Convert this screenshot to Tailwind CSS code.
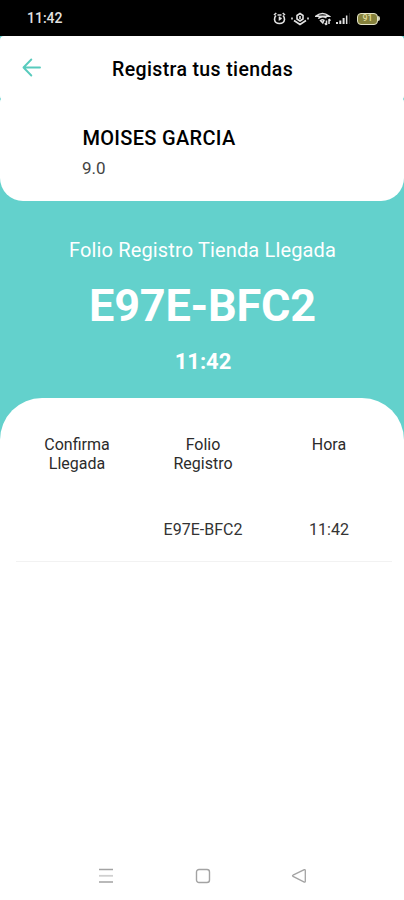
<!DOCTYPE html>
<html lang="es">
<head>
<meta charset="utf-8">
<meta name="viewport" content="width=device-width, initial-scale=1">
<title>Registra tus tiendas</title>
<script src="https://cdn.jsdelivr.net/npm/@tailwindcss/browser@4"></script>
</head>
<body class="bg-white">
<div class="flex h-[900px] w-[404px] flex-col overflow-hidden bg-[#63d1cc] font-[Roboto,sans-serif] text-black">
  <div class="flex h-9 shrink-0 items-center justify-between bg-black pl-[27px] pr-[24px] text-[#e2e2e2]">
    <span class="text-[14px] font-medium leading-9">11:42</span>
    <div class="flex items-center pt-px">
      <svg class="mr-[5px] h-[13px] w-[13px]" viewBox="0 0 13 13" fill="none" stroke="currentColor" stroke-width="1.6"><path d="M3 3.500Q1.500 5 1.500 7.500 2 11.500 6.500 11.500T11.500 7.500Q11.500 5 10 3.500M1 3 3.300 1M12 3 9.700 1M4.500 3h4M6.500 4.500V7.500L8.500 6"/></svg>
      <svg class="mr-[6px] h-[14px] w-[18px]" viewBox="0 0 18 14" fill="none" stroke="currentColor" stroke-width="1.6"><path d="M6 3.500 9 1.500l3 2v3.500L9 9 6 7ZM9 4v3M1 5.500v2M17 5.500v2M3 8.500 9 12.500 15 8.500"/></svg>
      <svg class="mr-[5px] h-[14px] w-[16px]" viewBox="0 0 16 14" fill="none" stroke="currentColor" stroke-width="1.5"><path d="M1 4.200Q7.500-1 14 4.200ZM3.200 6.500Q7.500 3 11.500 6M5.500 8.500Q7.500 7 9 8.300L7.800 11ZM11.500 13V8.500M9.800 11.200l1.700 1.800M14 7v5M14 7l1.500 1.700"/></svg>
      <svg class="mr-[7px] h-[12px] w-[14px]" viewBox="0 0 14 12" fill="currentColor"><path d="M0 9h2v2H0zM3.300 7.500h2V11h-2zM6.600 5h2v6h-2zM9.900 2.500h1.500V11H9.900z"/><path fill="#333" d="M13.300 0h.7v11h-.7z"/></svg>
      <span class="flex items-center">
        <span class="flex h-[12px] w-[21px] items-center justify-center rounded-[4px] border border-[#e4e4ca] bg-[#85813b] text-[9px] font-medium leading-none text-[#dedb9a]">91</span>
        <span class="h-[5px] w-[2px] rounded-r bg-[#d0d0b4]"></span>
      </span>
    </div>
  </div>
  <header class="flex h-16 shrink-0 items-center rounded-[4px] bg-white">
    <svg class="ml-[22px] h-[20px] w-[20px]" viewBox="0 0 20 20" fill="none" stroke="#58cbbd" stroke-width="1.9" stroke-linecap="round" stroke-linejoin="round"><path d="M18 9.500H1.500M9.300 1.500 1.500 9.500l7.800 8"/></svg>
    <h1 class="ml-[70px] whitespace-nowrap pt-[4px] text-[19.500px] font-medium leading-6 tracking-[0.37px]">Registra tus tiendas</h1>
  </header>
  <section class="-mt-[2px] flex h-[103px] shrink-0 flex-col rounded-t-[4px] rounded-b-[23px] bg-white pl-[82px] pt-[28px]">
    <h2 class="pl-[0.500px] text-[20px] font-medium leading-6 tracking-[0.3px]">MOISES GARCIA</h2>
    <p class="mt-[6px] text-[17px] leading-6 text-[#444]">9.0</p>
  </section>
  <section class="flex h-[197px] shrink-0 flex-col items-center pt-[37px] text-white">
    <p class="whitespace-nowrap pl-px text-[20px] leading-6 tracking-[0.14px]">Folio Registro Tienda Llegada</p>
    <p class="mt-[18px] pl-px text-[45px] font-bold leading-[52px] tracking-[-0.2px]">E97E-BFC2</p>
    <p class="mt-[16px] pl-[2px] text-[22px] font-bold leading-7">11:42</p>
  </section>
  <main class="flex grow flex-col rounded-t-[42px] bg-white pl-[14px] pr-[12px]">
    <div class="grid grid-cols-3 pt-[37px] text-center text-[16px] leading-[19px] text-[#2b2b2b]">
      <div>Confirma<br>Llegada</div>
      <div>Folio<br>Registro</div>
      <div>Hora</div>
    </div>
    <div class="ml-[2px] mt-[37px] border-b border-[#f2f2f2] pb-[22px]">
      <div class="-ml-[2px] grid grid-cols-3 pt-[10px] text-center text-[16px] leading-[19px] text-[#333]">
        <div></div>
        <div>E97E-BFC2</div>
        <div>11:42</div>
      </div>
    </div>
    <nav class="mt-auto flex h-[48px] items-center justify-between pl-[84px] pr-[85px]">
      <svg class="h-[16px] w-[16px]" viewBox="0 0 16 16" fill="none" stroke-width="1.300"><path stroke="#a3a3a3" d="M1 1.500h14M1 14h14"/><path stroke="#d0d0d0" stroke-width="1.800" d="M1 7.800h14"/></svg>
      <svg class="h-[16px] w-[16px]" viewBox="0 0 16 16" fill="none" stroke="#a3a3a3" stroke-width="1.400"><rect x="1.500" y="1.500" width="13" height="13" rx="2.500"/></svg>
      <svg class="h-[16px] w-[16px]" viewBox="0 0 16 16" fill="none" stroke="#a3a3a3" stroke-width="1.300" stroke-linejoin="round"><path d="M13.300 1.600 2 7.200q-1 .6 0 1.200l11.300 5.700q1 .3 1-.8V2.400q0-1.100-1-.8Z"/></svg>
    </nav>
  </main>
</div>
</body>
</html>
